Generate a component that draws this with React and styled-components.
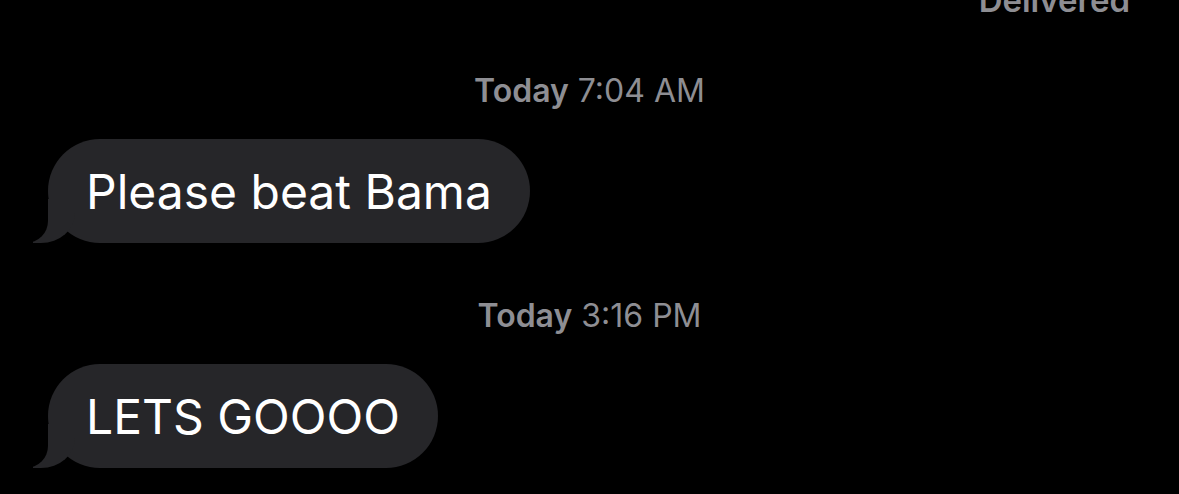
import React from 'react';
import styled, { createGlobalStyle } from 'styled-components';

const GlobalStyle = createGlobalStyle`
  html, body {
    margin: 0;
    padding: 0;
    background: #000;
  }
  body {
    font-family: Inter, "Noto Sans", "Liberation Sans", sans-serif;
    -webkit-font-smoothing: antialiased;
  }
`;

const Thread = styled.div`
  width: 1179px;
  height: 494px;
  overflow: hidden;
  background: #000;
  display: flex;
  flex-direction: column;
`;

const Status = styled.div`
  align-self: flex-end;
  margin-top: -18px;
  padding-right: 49px;
  font-size: 33px;
  line-height: 36px;
  font-weight: 600;
  color: #8e8e93;
`;

const Stamp = styled.div`
  display: flex;
  justify-content: center;
  gap: 9px;
  margin-top: ${(p) => p.$top}px;
  font-size: 32px;
  line-height: 36px;
  color: #8e8e93;

  b {
    font-weight: 600;
  }
`;

const Bubble = styled.div`
  position: relative;
  align-self: flex-start;
  margin: 30px 0 0 48px;
  padding: 0 38px;
  height: 104px;
  display: flex;
  align-items: center;
  border-radius: 52px;
  background: #262629;
  color: #fff;
  font-size: 48px;

  &::before {
    content: '';
    position: absolute;
    bottom: 0;
    left: -15px;
    width: 42px;
    height: 44px;
    background: #262629;
    border-bottom-right-radius: 34px 30px;
  }

  &::after {
    content: '';
    position: absolute;
    bottom: 0;
    left: -56px;
    width: 56px;
    height: 44px;
    background: #000;
    border-bottom-right-radius: 22px;
  }

  span {
    position: relative;
    z-index: 1;
  }
`;

const messages = [
  { day: 'Today', time: '7:04 AM', text: 'Please beat Bama', top: 55 },
  { day: 'Today', time: '3:16 PM', text: 'LETS GOOOO', top: 55 },
];

export default function App() {
  return (
    <>
      <GlobalStyle />
      <Thread>
        <Status>Delivered</Status>
        {messages.map((m) => (
          <React.Fragment key={m.time}>
            <Stamp $top={m.top}>
              <b>{m.day}</b>
              <span>{m.time}</span>
            </Stamp>
            <Bubble>
              <span>{m.text}</span>
            </Bubble>
          </React.Fragment>
        ))}
      </Thread>
    </>
  );
}
